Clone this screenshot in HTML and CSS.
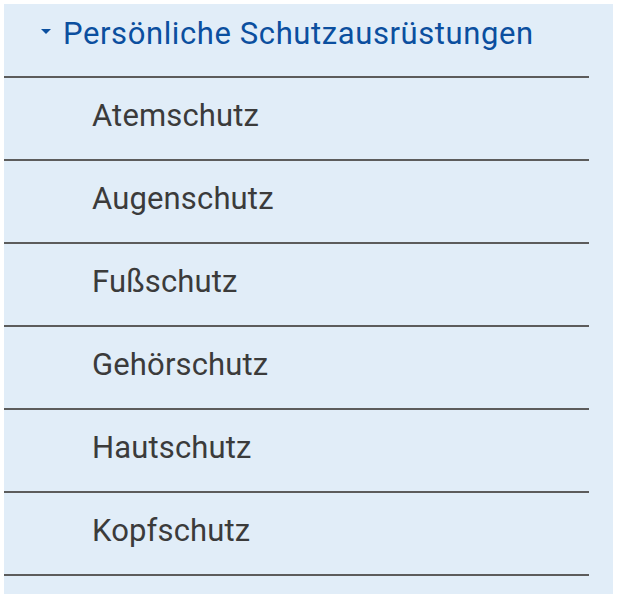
FILE: index.html
```html
<!DOCTYPE html>
<html lang="de">
<head>
  <meta charset="UTF-8" />
  <meta name="viewport" content="width=device-width, initial-scale=1.0"/>
  <title>Persönliche Schutzausrüstungen</title>
  <link rel="stylesheet" href="styles.css">
</head>
<body>
  <nav class="sidebar">
    <ul class="menu">
      <li class="menu-head">
        <a href="#"><span class="caret"></span>Persönliche Schutzausrüstungen</a>
      </li>
      <li><a href="#">Atemschutz</a></li>
      <li><a href="#">Augenschutz</a></li>
      <li><a href="#">Fußschutz</a></li>
      <li><a href="#">Gehörschutz</a></li>
      <li><a href="#">Hautschutz</a></li>
      <li><a href="#">Kopfschutz</a></li>
    </ul>
  </nav>
</body>
</html>
```

FILE: styles.css
```css
body {
  margin: 0;
  background-color: white;
  font-family: Roboto, "Noto Sans", sans-serif;
}

.sidebar {
  margin: 4px 5px 6px 4px;
  height: 590px;
  background-color: #e1edf8;
}

.menu {
  list-style: none;
  margin: 0 24px 0 0;
  padding: 0;
}

.menu li {
  border-bottom: 2px solid #5c5c5c;
}

.menu a {
  display: flex;
  align-items: center;
  box-sizing: border-box;
  height: 81px;
  padding: 0 0 6px 88px;
  color: #3b3b3b;
  font-size: 31px;
  letter-spacing: 0.15px;
  text-decoration: none;
}

.menu .menu-head a {
  height: 72px;
  padding: 0 0 13px 37px;
  color: #0b4f9f;
  letter-spacing: 0.6px;
}

.caret {
  width: 0;
  height: 0;
  margin: 0 12px 5px 0;
  border-left: 5.5px solid transparent;
  border-right: 5.5px solid transparent;
  border-top: 5px solid #0b4f9f;
}
```
